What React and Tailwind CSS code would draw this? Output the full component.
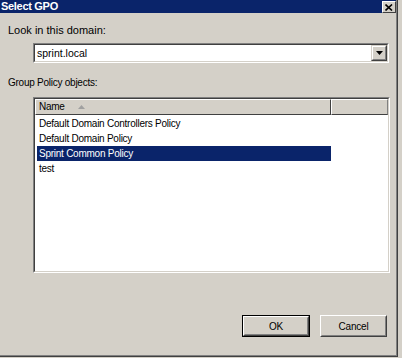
export default function App() {
  const rows = [
    "Default Domain Controllers Policy",
    "Default Domain Policy",
    "Sprint Common Policy",
    "test",
  ];
  return (
    <div className="w-[402px] h-[358px] bg-[#d4d0c8] overflow-hidden font-['Liberation_Sans',Arial,sans-serif] text-[11px] text-black">
      <div className="w-[398px] h-[357px] border-r border-b border-[#404040] flex flex-col">
        <div className="w-[397px] h-[13px] border-r border-b border-[#808080] flex-1 flex flex-col">
          {/* Title bar */}
          <div className="h-[13px] bg-[#0a246a] flex items-center justify-between pl-[1px] pr-[0px]">
            <span className="text-white font-bold text-[11px] tracking-[-0.3px] leading-none">Select GPO</span>
            <div className="w-[14px] h-[12px] bg-[#d4d0c8] border border-t-white border-l-white border-b-[#404040] border-r-[#404040] flex items-center justify-center mt-[1px]">
              <svg width="8" height="7" viewBox="0 0 8 7">
                <path d="M0.5 0.5 L7 6.5 M7 0.5 L0.5 6.5" stroke="black" strokeWidth="1.6" />
              </svg>
            </div>
          </div>

          <div className="pl-[8px] mt-[11px] leading-[13px]">Look in this domain:</div>

          {/* Combo */}
          <div className="ml-[33px] mt-[6px] w-[356px] h-[20px] border border-t-[#808080] border-l-[#808080] border-b-white border-r-white">
            <div className="w-full h-full border border-t-[#404040] border-l-[#404040] border-b-[#d4d0c8] border-r-[#d4d0c8] bg-white flex items-center">
              <span className="flex-1 pl-[2px] leading-[13px] text-[10.5px]">sprint.local</span>
              <div className="w-[16px] h-full bg-[#d4d0c8] border border-t-[#d4d0c8] border-l-[#d4d0c8] border-b-[#404040] border-r-[#404040]">
                <div className="w-full h-full border border-t-white border-l-white border-b-[#808080] border-r-[#808080] flex items-center justify-center">
                  <svg width="7" height="4" viewBox="0 0 7 4">
                    <path d="M0 0 H7 L3.5 4 Z" fill="black" />
                  </svg>
                </div>
              </div>
            </div>
          </div>

          <div className="pl-[8px] mt-[13px] leading-[13px] text-[10px] tracking-[-0.25px]">Group Policy objects:</div>

          {/* List */}
          <div className="ml-[33px] mt-[8px] w-[357px] h-[176px] border border-t-[#808080] border-l-[#808080] border-b-white border-r-white">
            <div className="w-full h-full border border-t-[#404040] border-l-[#404040] border-b-[#d4d0c8] border-r-[#d4d0c8] bg-white flex flex-col text-[10px] tracking-[-0.25px]">
              <div className="h-[16px] flex">
                <div className="w-[296px] h-full bg-[#d4d0c8] border-t border-l border-t-white border-l-white border-b border-r border-b-[#404040] border-r-[#404040] flex items-center pl-[3px] gap-[13px]">
                  <span className="leading-none">Name</span>
                  <svg width="7" height="4" viewBox="0 0 7 4">
                    <path d="M0 4 H7 L3.5 0 Z" fill="#a0a0a0" />
                  </svg>
                </div>
                <div className="flex-1 h-full bg-[#d4d0c8] border-t border-l border-t-white border-l-white border-b border-r border-b-[#404040] border-r-[#808080]" />
              </div>
              <div className="flex flex-col pt-[1px] pl-[2px]">
                {rows.map((r, i) => (
                  <div
                    key={r}
                    className={
                      i === 2
                        ? "w-[294px] h-[15px] flex items-center pl-[2px] bg-[#0a246a] text-white"
                        : "w-[294px] h-[15px] flex items-center pl-[2px]"
                    }
                  >
                    <span className="leading-none">{r}</span>
                  </div>
                ))}
              </div>
            </div>
          </div>

          {/* Buttons */}
          <div className="mt-[42px] flex justify-end gap-[10px] pr-[9px] text-[10px] tracking-[-0.2px]">
            <div className="w-[68px] h-[22px] border border-black">
              <div className="w-full h-full border border-t-white border-l-white border-b-[#404040] border-r-[#404040]">
                <div className="w-full h-full border border-t-[#d4d0c8] border-l-[#d4d0c8] border-b-[#808080] border-r-[#808080] flex items-center justify-center">
                  OK
                </div>
              </div>
            </div>
            <div className="w-[67px] h-[22px] border border-t-white border-l-white border-b-[#404040] border-r-[#404040]">
              <div className="w-full h-full border border-t-[#d4d0c8] border-l-[#d4d0c8] border-b-[#808080] border-r-[#808080] flex items-center justify-center">
                Cancel
              </div>
            </div>
          </div>
        </div>
      </div>
    </div>
  );
}
